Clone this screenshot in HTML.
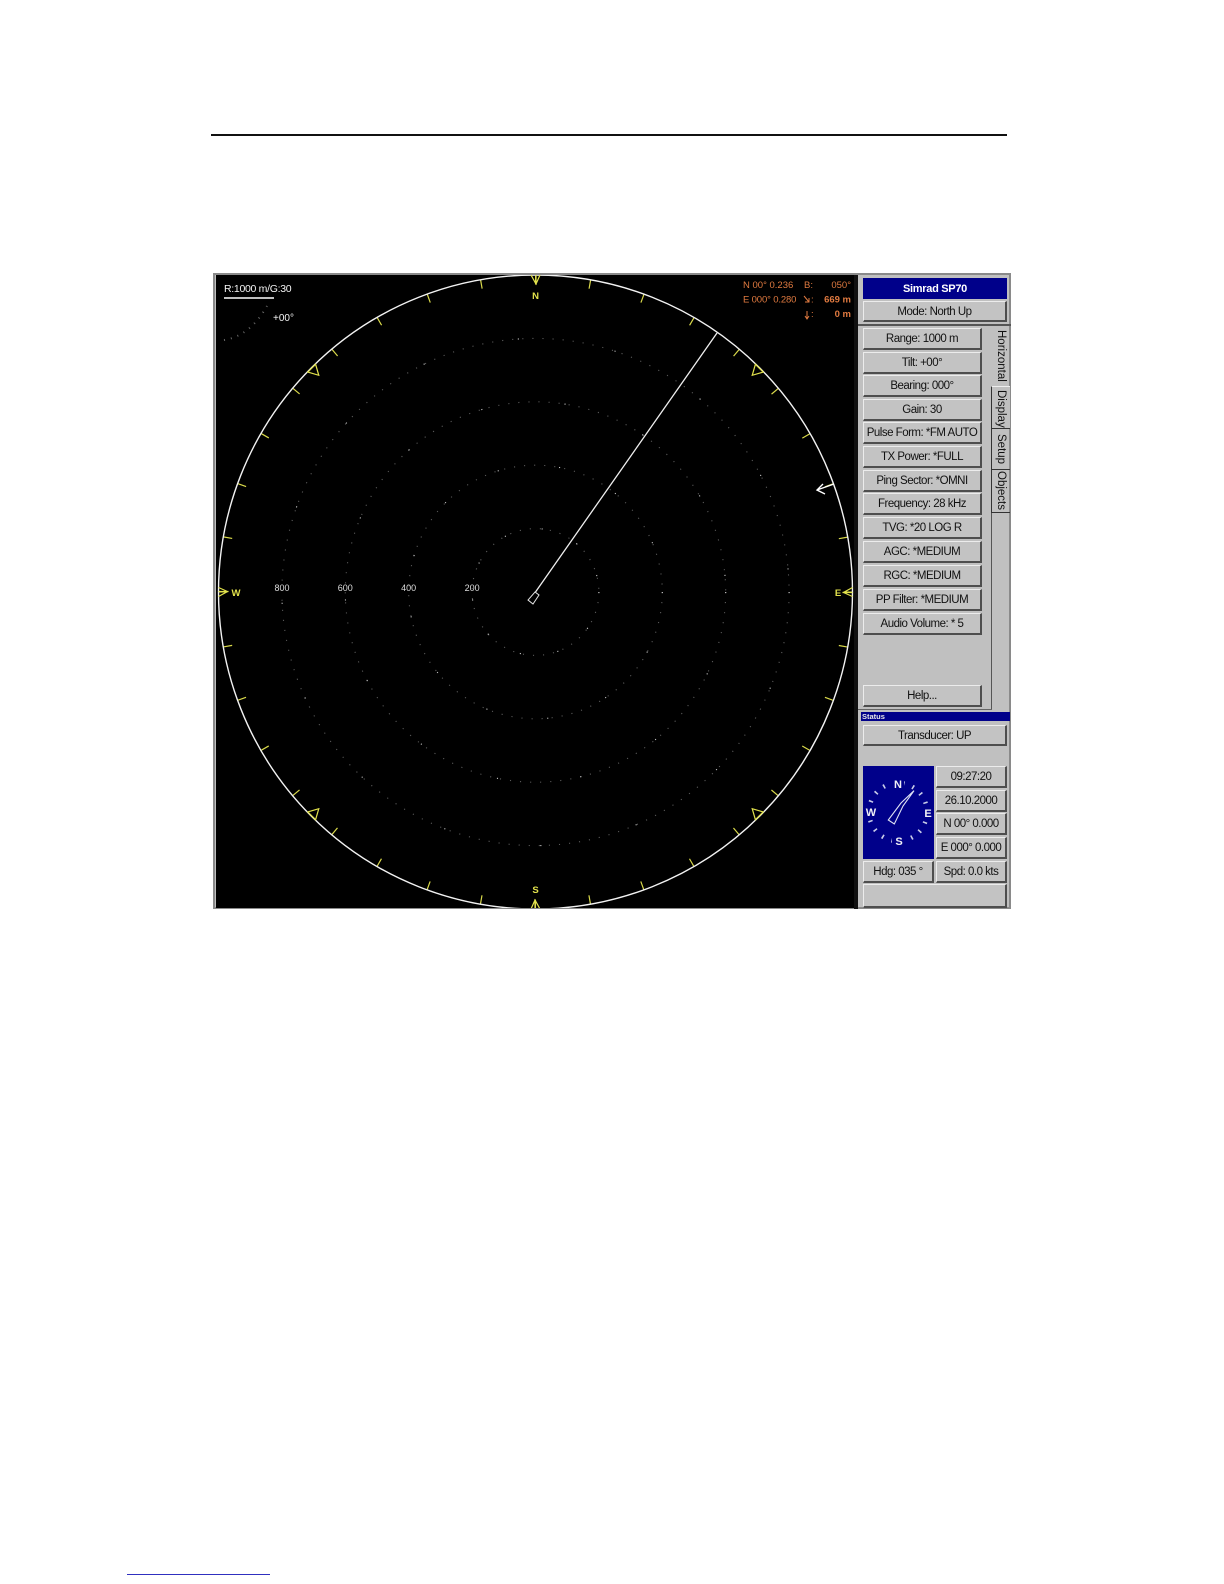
<!DOCTYPE html>
<html><head><meta charset="utf-8"><style>
html,body{margin:0;padding:0;background:#fff}
#p{position:relative;width:1224px;height:1584px;overflow:hidden;background:#fff;font-family:"Liberation Sans",sans-serif}
#p div{position:absolute;box-sizing:border-box}
.b{background:#c3c3c3;border:1px solid;border-color:#ececec #4e4e4e #4e4e4e #ececec;border-width:1.5px 2px 2px 1.5px;color:#111;font-size:11.5px;letter-spacing:-.5px;text-align:center;white-space:nowrap;line-height:20px;filter:blur(.35px)}
.w{left:863px;width:119px;height:22px}
.s{left:936px;width:71px;height:22px}
.t{color:#111;font-size:11.5px;white-space:nowrap;transform:rotate(90deg);transform-origin:0 0;filter:blur(.3px)}
svg text{font-family:"Liberation Sans",sans-serif}
</style></head><body><div id="p">
<div style="left:211px;top:134px;width:796px;height:2px;background:#111"></div>
<div style="left:127px;top:1574px;width:143px;height:1px;background:#3030c0"></div>

<div style="left:213px;top:273px;width:798px;height:636px;background:#c0c0c0;border:2px solid #8a8a8a"></div>
<div style="left:854px;top:275px;width:4px;height:634px;background:#111"></div>

<svg style="position:absolute;left:0;top:0" width="1224" height="1584" viewBox="0 0 1224 1584">
<defs><clipPath id="c"><rect x="216" y="275" width="638" height="633"/></clipPath></defs>
<rect x="216" y="275" width="638" height="633" fill="#000"/>
<g clip-path="url(#c)" fill="none">
<circle cx="535.5" cy="592" r="63.4" stroke="#5c5c5c" stroke-width="1.1" stroke-dasharray="1.1 9"/>
<circle cx="535.5" cy="592" r="126.8" stroke="#5c5c5c" stroke-width="1.1" stroke-dasharray="1.1 9"/>
<circle cx="535.5" cy="592" r="190.2" stroke="#5c5c5c" stroke-width="1.1" stroke-dasharray="1.1 9"/>
<circle cx="535.5" cy="592" r="253.6" stroke="#5c5c5c" stroke-width="1.1" stroke-dasharray="1.1 9"/>
<circle cx="535.5" cy="592" r="63.4" stroke="#ccc" stroke-width="1.1" stroke-dasharray="1.1 37"/>
<circle cx="535.5" cy="592" r="126.8" stroke="#ccc" stroke-width="1.1" stroke-dasharray="1.1 61"/>
<circle cx="535.5" cy="592" r="190.2" stroke="#ccc" stroke-width="1.1" stroke-dasharray="1.1 83"/>
<circle cx="535.5" cy="592" r="253.6" stroke="#ccc" stroke-width="1.1" stroke-dasharray="1.1 97"/>
<circle cx="535.5" cy="592" r="312.5" stroke="#d9d94a" stroke-width="9" stroke-dasharray="1.2 53.34" stroke-dashoffset="0.6"/>
<circle cx="535.5" cy="592" r="317" stroke="#f2f2f2" stroke-width="1.4"/>
<g stroke="#e2e24c" stroke-width="1.2">
<path d="M531 275 L536 284 L540 275 M536 275V285"/>
<path d="M531 275 L536 284 L540 275 M536 275V285" transform="rotate(90 535.5 592)"/>
<path d="M531 275 L536 284 L540 275 M536 275V285" transform="rotate(180 535.5 592)"/>
<path d="M531 275 L536 284 L540 275 M536 275V285" transform="rotate(270 535.5 592)"/>
<path d="M530 275.5 L535.5 285.5 L541 275.5Z" transform="rotate(45 535.5 592)"/>
<path d="M530 275.5 L535.5 285.5 L541 275.5Z" transform="rotate(135 535.5 592)"/>
<path d="M530 275.5 L535.5 285.5 L541 275.5Z" transform="rotate(225 535.5 592)"/>
<path d="M530 275.5 L535.5 285.5 L541 275.5Z" transform="rotate(315 535.5 592)"/>
</g>
<path d="M535.5 592 L717 333" stroke="#efefef" stroke-width="1.3"/>
<path d="M535 592 L539 595 L533 604 L528 600Z" stroke="#e6e6e6" stroke-width="1"/>
<path d="M834 484 L817 490 M823 484 L817 490 L825 494" stroke="#fff" stroke-width="1.4"/>
<path d="M224 340 Q250 336 267 306" stroke="#666" stroke-width="2" stroke-dasharray="1 6"/>
</g>
<path d="M224 298H274" stroke="#fff" stroke-width="1.4"/>
<g fill="#f4f4f4" font-size="10.5">
<text x="224" y="292" letter-spacing="-.3">R:1000 m/G:30</text>
<text x="273" y="321" font-size="10">+00°</text>
</g>
<g fill="#ddd" font-size="9" text-anchor="middle">
<text x="282" y="591">800</text><text x="345.3" y="591">600</text><text x="408.7" y="591">400</text><text x="472.1" y="591">200</text>
</g>
<g fill="#e2e24c" font-size="9.5" font-weight="bold" text-anchor="middle">
<text x="535.5" y="299">N</text><text x="535.5" y="893">S</text><text x="236" y="596">W</text><text x="838" y="596">E</text>
</g>
<g fill="#e07a40" font-size="9.5">
<text x="743" y="288">N  00° 0.236</text>
<text x="743" y="302.5" letter-spacing="-.15">E 000° 0.280</text>
<text x="804" y="288">B:</text>
<text x="851" y="288" text-anchor="end">050°</text>
<text x="851" y="302.5" text-anchor="end" font-weight="bold">669 m</text>
<text x="851" y="317" text-anchor="end" font-weight="bold">0 m</text>
<text x="811" y="302.5">:</text>
<text x="811" y="317">:</text>
<path d="M804 296 L809 302 M809 298V302H805" fill="none" stroke="#e07a40"/>
<path d="M807 311V318 M805 316L807 319L809 316" fill="none" stroke="#e07a40"/>
</g>
</svg>

<div style="left:858px;top:275px;width:151px;height:49px;background:#c0c0c0"></div>
<div style="left:863px;top:278px;width:144px;height:21px;background:#00008a;color:#fff;font-size:11px;letter-spacing:-.3px;text-align:center;line-height:22px;font-weight:bold;filter:blur(.3px)">Simrad SP70</div>
<div class="b" style="left:863px;top:301px;width:144px;height:21px">Mode: North Up</div>
<div style="left:858px;top:324px;width:153px;height:2px;background:#555"></div>

<div style="left:991px;top:386px;width:1px;height:323px;background:#555"></div>
<div style="left:858px;top:709px;width:134px;height:1px;background:#666"></div>

<div class="b w" style="top:328px">Range: 1000 m</div>
<div class="b w" style="top:352px">Tilt: +00°</div>
<div class="b w" style="top:375px">Bearing: 000°</div>
<div class="b w" style="top:399px">Gain: 30</div>
<div class="b w" style="top:422px">Pulse Form: *FM AUTO</div>
<div class="b w" style="top:446px">TX Power: *FULL</div>
<div class="b w" style="top:470px">Ping Sector: *OMNI</div>
<div class="b w" style="top:493px">Frequency: 28 kHz</div>
<div class="b w" style="top:517px">TVG: *20 LOG R</div>
<div class="b w" style="top:541px">AGC: *MEDIUM</div>
<div class="b w" style="top:565px">RGC: *MEDIUM</div>
<div class="b w" style="top:589px">PP Filter: *MEDIUM</div>
<div class="b w" style="top:613px">Audio Volume: * 5</div>
<div class="b w" style="top:685px;height:22px">Help...</div>

<div style="left:991px;top:386px;width:19px;height:43px;border:1px solid #333;border-right:0;border-top-color:#eee;background:#c0c0c0"></div>
<div style="left:991px;top:429px;width:19px;height:41px;border-left:1px solid #333;border-bottom:1px solid #333"></div>
<div style="left:991px;top:470px;width:19px;height:43px;border-left:1px solid #333;border-bottom:1px solid #333"></div>
<div class="t" style="left:1007px;top:330px">Horizontal</div>
<div class="t" style="left:1007px;top:390px">Display</div>
<div class="t" style="left:1007px;top:434px">Setup</div>
<div class="t" style="left:1007px;top:471px">Objects</div>

<div style="left:861px;top:712px;width:149px;height:9px;background:#00008a;color:#e8e8e8;font-size:7.5px;line-height:9px;padding-left:1px;font-weight:bold">Status</div>
<div class="b" style="left:863px;top:725px;width:144px;height:21px">Transducer: UP</div>

<svg style="position:absolute;left:863px;top:766px" width="71" height="93" viewBox="863 766 71 93">
<rect x="863" y="766" width="71" height="93" fill="#00008a"/>
<circle cx="898" cy="812" r="29" fill="none" stroke="#c8cce8" stroke-width="4.5" stroke-dasharray="1.6 8.5"/>
<path d="M888.3 820L894.3 824L903 806L914 790.7L901 803Z" fill="#00008a" stroke="#dfe2f4" stroke-width="1.1"/>
<g fill="#f0f0f6" font-size="11" font-weight="bold" text-anchor="middle">
<rect x="892" y="778" width="12" height="12" fill="#00008a"/>
<rect x="865" y="806" width="12" height="12" fill="#00008a"/>
<rect x="922" y="806" width="12" height="12" fill="#00008a"/>
<rect x="892" y="835" width="12" height="12" fill="#00008a"/>
<text x="898" y="788">N</text><text x="899" y="845">S</text><text x="871" y="816">W</text><text x="928" y="817">E</text>
</g>
</svg>

<div class="b s" style="top:766px">09:27:20</div>
<div class="b s" style="top:790px">26.10.2000</div>
<div class="b s" style="top:813px">N 00° 0.000</div>
<div class="b s" style="top:837px">E 000° 0.000</div>
<div class="b" style="left:863px;top:861px;width:71px;height:22px">Hdg: 035 °</div>
<div class="b s" style="top:861px">Spd: 0.0 kts</div>
<div class="b" style="left:863px;top:884px;width:144px;height:24px"></div>
</div></body></html>
